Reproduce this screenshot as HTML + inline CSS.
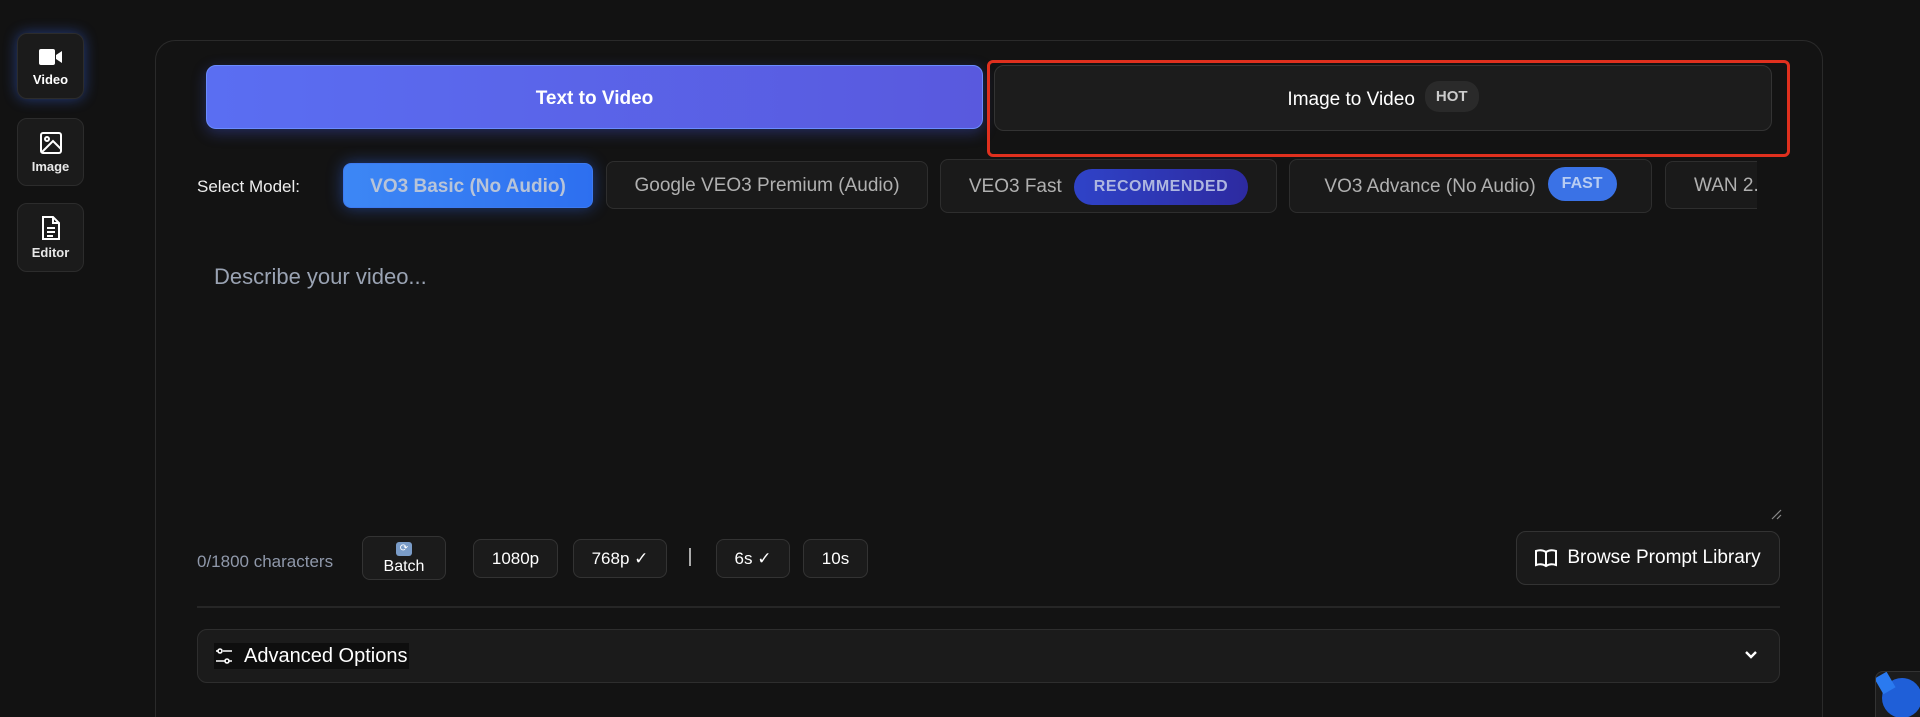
<!DOCTYPE html>
<html style="width:1920px;height:717px;overflow:hidden"><head><meta charset="utf-8"><style>
*{box-sizing:border-box;margin:0;padding:0}
body{width:1920px;height:717px;background:#121212;font-family:"Liberation Sans",sans-serif;color:#fff;overflow:hidden;position:relative}
.abs{position:absolute}
.side{position:absolute;left:17px;width:67px;border-radius:10px;background:#1b1b1b;border:1px solid #2c2c2c;display:flex;flex-direction:column;align-items:center;justify-content:center;gap:4px;font-size:13px;font-weight:bold;color:#e8e8e8}
.side.act{box-shadow:0 0 14px rgba(60,110,255,.45);color:#fff}
.panel{left:155px;top:40px;width:1668px;height:677px;border:1px solid #2a2a2a;border-bottom:none;border-radius:20px 20px 0 0;background:#131313}
.chip{position:absolute;border:1px solid #2e2e2e;background:#1a1a1a;border-radius:8px;display:flex;align-items:center;justify-content:center;font-size:19px;color:#b0b0b0;gap:12px;padding-top:2px}
.sm{position:absolute;border:1px solid #333;background:#1b1b1b;border-radius:8px;display:flex;align-items:center;justify-content:center;font-size:17px;color:#fff}
</style></head><body>
<div class="side act" style="top:33px;height:66px">
<svg width="26" height="22" viewBox="0 0 26 22"><rect x="1" y="3" width="16" height="16" rx="2" fill="#fff"/><path d="M18 9l6-4v12l-6-4z" fill="#fff"/></svg>Video</div>
<div class="side" style="top:118px;height:68px">
<svg width="24" height="24" viewBox="0 0 24 24" fill="none" stroke="#fff" stroke-width="2"><rect x="2" y="2" width="20" height="20" rx="2"/><circle cx="8" cy="8" r="2"/><path d="M3 21l11-11 8 8"/></svg>Image</div>
<div class="side" style="top:203px;height:69px">
<svg width="22" height="26" viewBox="0 0 22 26" fill="none" stroke="#fff" stroke-width="2"><path d="M3 2h10l6 6v16H3z"/><path d="M13 2v6h6M7 13h8M7 17h8M7 21h6"/></svg>Editor</div>

<div class="abs panel"></div>
<div class="abs" style="left:206px;top:65px;width:777px;height:64px;border-radius:10px;background:linear-gradient(90deg,#5a6ef2,#5959de);border:1px solid #6a8cff;box-shadow:0 4px 14px rgba(70,90,230,.35);display:flex;align-items:center;justify-content:center;font-weight:bold;font-size:19px;padding-top:3px">Text to Video</div>
<div class="abs" style="left:994px;top:65px;width:778px;height:66px;border-radius:10px;background:#1c1c1c;border:1px solid #333;display:flex;align-items:center;justify-content:center;font-size:19px;gap:10px;padding-top:3px">Image to Video <span style="background:#2a2a2a;border-radius:14px;padding:7px 11px;font-size:15px;font-weight:bold;color:#ccc;margin-top:-6px">HOT</span></div>

<div class="abs" style="left:197px;top:177px;font-size:17px;color:#eee">Select Model:</div>
<div class="chip" style="left:343px;top:163px;width:250px;height:45px;background:linear-gradient(90deg,#3d87f5,#2d6ff0);border-color:#3d7af0;color:#b8c4d8;font-weight:bold;box-shadow:0 0 16px rgba(50,110,255,.45)">VO3 Basic (No Audio)</div>
<div class="chip" style="left:606px;top:161px;width:322px;height:48px">Google VEO3 Premium (Audio)</div>
<div class="chip" style="left:940px;top:159px;width:337px;height:54px">VEO3 Fast <span style="background:linear-gradient(90deg,#2f43c8,#2d2aa0);border-radius:20px;padding:9px 20px;font-size:16px;font-weight:bold;color:#aeb6e0;letter-spacing:.5px">RECOMMENDED</span></div>
<div class="chip" style="left:1289px;top:159px;width:363px;height:54px">VO3 Advance (No Audio) <span style="background:#3a72e6;border-radius:20px;padding:8px 14px;font-size:16px;font-weight:bold;color:#b8cdf2;margin-top:-6px">FAST</span></div>
<div class="chip" style="left:1665px;top:161px;width:110px;height:48px;justify-content:flex-start;padding-left:28px;border-right:none;border-radius:8px 0 0 8px">WAN 2.</div>
<div class="abs" style="left:1757px;top:158px;width:30px;height:62px;background:#131313"></div>
<div class="abs" style="left:987px;top:60px;width:803px;height:97px;border:3px solid #e0301e;border-radius:6px"></div>

<div class="abs" style="left:214px;top:264px;font-size:22px;color:#9aa3b3">Describe your video...</div>
<svg class="abs" style="left:1770px;top:508px" width="12" height="12" viewBox="0 0 12 12" stroke="#888" stroke-width="1.2"><path d="M2 11L11 2M7 11l4-4"/></svg>

<div class="abs" style="left:197px;top:552px;font-size:17px;color:#8f98aa">0/1800 characters</div>
<div class="sm" style="left:362px;top:536px;width:84px;height:44px;flex-direction:column;gap:2px;font-size:16px;padding-top:2px"><span style="width:16px;height:14px;background:#7a9cc8;border-radius:3px;display:block;font-size:10px;line-height:14px;color:#fff;text-align:center">⟳</span>Batch</div>
<div class="sm" style="left:473px;top:539px;width:85px;height:39px">1080p</div>
<div class="sm" style="left:573px;top:539px;width:94px;height:39px">768p ✓</div>
<div class="abs" style="left:689px;top:548px;width:2px;height:18px;background:#aaa"></div>
<div class="sm" style="left:716px;top:539px;width:74px;height:39px">6s ✓</div>
<div class="sm" style="left:803px;top:539px;width:65px;height:39px">10s</div>

<div class="sm" style="left:1516px;top:531px;width:264px;height:54px;border-radius:10px;font-size:19px;gap:10px;background:#1a1a1a">
<svg width="22" height="20" viewBox="0 0 22 20" fill="none" stroke="#fff" stroke-width="2"><path d="M11 4C8 2 4 2 1 3v14c3-1 7-1 10 1 3-2 7-2 10-1V3c-3-1-7-1-10 1zM11 4v14"/></svg>Browse Prompt Library</div>

<div class="abs" style="left:197px;top:606px;width:1583px;height:2px;background:#262626"></div>
<div class="abs" style="left:197px;top:629px;width:1583px;height:54px;border:1px solid #2e2e2e;border-radius:10px;background:#1b1b1b"></div>
<div class="abs" style="left:214px;top:643px;height:26px;background:#0e0e0e;display:flex;align-items:center;gap:10px;font-size:20px;padding-right:2px">
<svg width="20" height="20" viewBox="0 0 20 20" fill="none" stroke="#fff" stroke-width="1.6"><circle cx="6" cy="5" r="2"/><path d="M9 5h9M2 5h2"/><circle cx="13" cy="15" r="2"/><path d="M2 15h9M15 15h3"/></svg>Advanced Options</div>
<svg class="abs" style="left:1744px;top:650px" width="14" height="10" viewBox="0 0 14 10" fill="none" stroke="#fff" stroke-width="2.4"><path d="M2 2l5 5 5-5"/></svg>

<div class="abs" style="left:1875px;top:671px;width:60px;height:60px;border-radius:8px;background:#1c1c1c;border:1px solid #333;overflow:hidden"><div style="position:absolute;left:6px;top:6px;width:40px;height:40px;border-radius:50%;background:#1f5fd8"></div><div style="position:absolute;left:2px;top:2px;width:14px;height:18px;background:#2a7af0;transform:rotate(-30deg)"></div></div>
</body></html>
